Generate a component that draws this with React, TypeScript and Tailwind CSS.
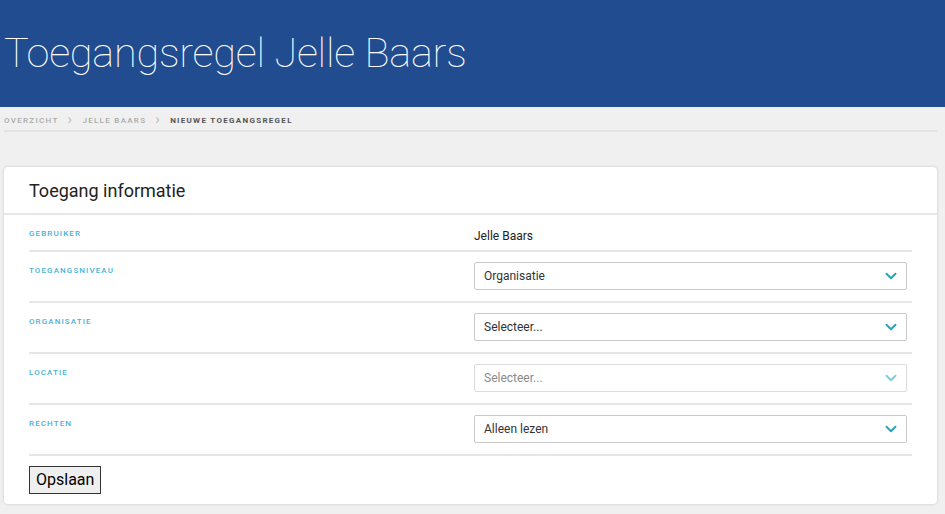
import { ChevronDown } from "lucide-react";

const rows = [
  { label: "Toegangsniveau", value: "Organisatie", placeholder: false },
  { label: "Organisatie", value: "Selecteer...", placeholder: false },
  { label: "Locatie", value: "Selecteer...", placeholder: true },
  { label: "Rechten", value: "Alleen lezen", placeholder: false },
];

const SelectBox = ({ value, placeholder }: { value: string; placeholder: boolean }) => (
  <div
    className={`h-[28px] flex items-center justify-between pl-[9px] pr-[6px] bg-white border rounded-[2px] ${
      placeholder ? "border-[#dcdcdc]" : "border-[#c9c9c9]"
    }`}
  >
    <span className={`text-[12px] ${placeholder ? "text-[#8a8a8a]" : "text-[#333]"}`}>{value}</span>
    <ChevronDown
      className={`w-[18px] h-[18px] ${placeholder ? "text-[#7fcbdc]" : "text-[#2aa3bd]"}`}
      strokeWidth={2.6}
    />
  </div>
);

const App = () => {
  return (
    <div className="min-h-[514px] bg-[#f0f0f0] font-['Roboto',sans-serif] overflow-hidden">
      {/* Header */}
      <div className="h-[107px] bg-[#214c8f] flex items-center pl-[4px] pb-[2px]">
        <h1 className="text-[41.5px] font-thin text-white leading-none tracking-[-0.25px]">
          Toegangsregel Jelle Baars
        </h1>
      </div>

      {/* Breadcrumb */}
      <div className="mx-[4px] mr-[8px] h-[25px] border-b-2 border-[#e2e2e2] flex items-center gap-[9px] text-[8px] font-medium tracking-[1.3px] uppercase pt-[4px]">
        <span className="text-[#aaa]">Overzicht</span>
        <span className="text-[#aaa] text-[15px] font-light leading-none mb-[2px]">›</span>
        <span className="text-[#aaa]">Jelle Baars</span>
        <span className="text-[#aaa] text-[15px] font-light leading-none mb-[2px]">›</span>
        <span className="text-[#555] font-bold">Nieuwe toegangsregel</span>
      </div>

      {/* Card */}
      <div className="mt-[35px] ml-[4px] mr-[8px] bg-white rounded-[4px] shadow-[0_0_3px_rgba(0,0,0,0.18)]">
        <div className="h-[48px] flex items-center px-[25px] border-b-2 border-[#e6e6e6]">
          <h2 className="text-[18px] text-[#222] pt-[1px]">Toegang informatie</h2>
        </div>

        <div className="px-[25px] pr-[25px]">
          <div className="h-[37px] flex items-start border-b-2 border-[#e6e6e6]">
            <div className="w-[445px] pt-[13px] text-[8px] font-medium tracking-[1.1px] uppercase text-[#49b3d4]">
              Gebruiker
            </div>
            <div className="pt-[12px] text-[12px] text-[#222]">Jelle Baars</div>
          </div>

          {rows.map((row) => (
            <div key={row.label} className="h-[51px] flex items-start border-b-2 border-[#e6e6e6]">
              <div className="w-[445px] pt-[13px] text-[8px] font-medium tracking-[1.1px] uppercase text-[#49b3d4]">
                {row.label}
              </div>
              <div className="flex-1 pt-[10px] pr-[5px]">
                <SelectBox value={row.value} placeholder={row.placeholder} />
              </div>
            </div>
          ))}

          <div className="pt-[10px] pb-[10px]">
            <button className="h-[28px] px-[6px] border border-[#333] bg-[#efefef] text-[16px] text-black leading-none">
              Opslaan
            </button>
          </div>
        </div>
      </div>
    </div>
  );
};

export default App;
